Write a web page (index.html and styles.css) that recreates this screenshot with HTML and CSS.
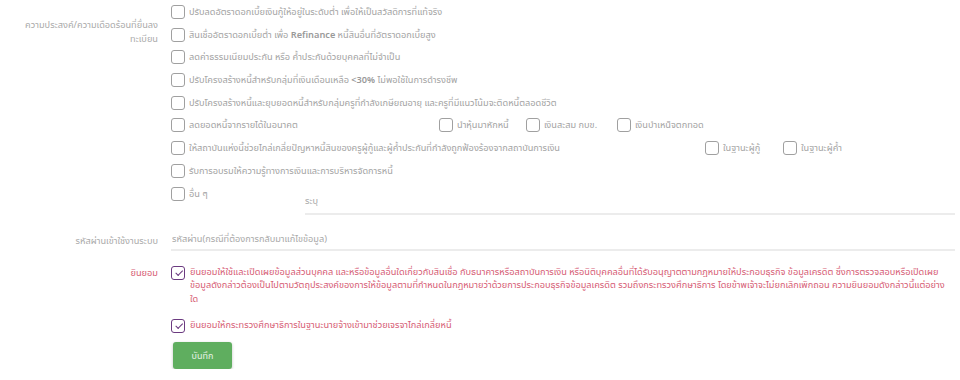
FILE: index.html
```html
<!doctype html>
<html lang="th">
<head>
  <meta charset="UTF-8">
  <meta name="viewport" content="width=device-width, initial-scale=1.0">
  <title>ลงทะเบียน</title>
  <link rel="stylesheet" href="styles.css">
</head>
<body>
<form class="register-form">
  <div class="form-row row-needs">
    <label class="form-label label-needs">ความประสงค์/ความเดือดร้อนที่ยื่นลงทะเบียน</label>
    <div class="check-list">
      <div class="check-item"><span class="check-box"></span><span>ปรับลดอัตราดอกเบี้ยเงินกู้ให้อยู่ในระดับต่ำ เพื่อให้เป็นสวัสดิการที่แท้จริง</span></div>
      <div class="check-item"><span class="check-box"></span><span>สินเชื่ออัตราดอกเบี้ยต่ำ เพื่อ <b>Refinance</b> หนี้สินอื่นที่อัตราดอกเบี้ยสูง</span></div>
      <div class="check-item"><span class="check-box"></span><span>ลดค่าธรรมเนียมประกัน หรือ ค้ำประกันด้วยบุคคลที่ไม่จำเป็น</span></div>
      <div class="check-item"><span class="check-box"></span><span>ปรับโครงสร้างหนี้สำหรับกลุ่มที่เงินเดือนเหลือ <b>&lt;30%</b> ไม่พอใช้ในการดำรงชีพ</span></div>
      <div class="check-item"><span class="check-box"></span><span>ปรับโครงสร้างหนี้และยุบยอดหนี้สำหรับกลุ่มครูที่กำลังเกษียณอายุ และครูที่มีแนวโน้มจะติดหนี้ตลอดชีวิต</span></div>
      <div class="check-item">
        <span class="check-box"></span><span class="item-text text-short">ลดยอดหนี้จากรายได้ในอนาคต</span>
        <span class="sub-option opt-1"><span class="check-box"></span><span>นำหุ้นมาหักหนี้</span></span>
        <span class="sub-option opt-2"><span class="check-box"></span><span>เงินสะสม กบข.</span></span>
        <span class="sub-option"><span class="check-box"></span><span>เงินบำเหน็จตกทอด</span></span>
      </div>
      <div class="check-item">
        <span class="check-box"></span><span class="item-text text-long">ให้สถาบันแห่งนี้ช่วยไกล่เกลี่ยปัญหาหนี้สินของครูผู้กู้และผู้ค้ำประกันที่กำลังถูกฟ้องร้องจากสถาบันการเงิน</span>
        <span class="sub-option opt-3"><span class="check-box"></span><span>ในฐานะผู้กู้</span></span>
        <span class="sub-option"><span class="check-box"></span><span>ในฐานะผู้ค้ำ</span></span>
      </div>
      <div class="check-item"><span class="check-box"></span><span>รับการอบรมให้ความรู้ทางการเงินและการบริหารจัดการหนี้</span></div>
      <div class="check-item item-other">
        <span class="check-box"></span><span class="item-text text-other">อื่น ๆ</span>
        <input class="line-input input-other" type="text" placeholder="ระบุ">
      </div>
    </div>
  </div>

  <div class="form-row row-password">
    <label class="form-label">รหัสผ่านเข้าใช้งานระบบ</label>
    <input class="line-input" type="password" placeholder="รหัสผ่าน(กรณีที่ต้องการกลับมาแก้ไขข้อมูล)">
  </div>

  <div class="form-row row-consent">
    <label class="form-label label-consent">ยินยอม</label>
    <div class="consent-list">
      <div class="consent-item"><span class="check-box checked"></span><span>ยินยอมให้ใช้และเปิดเผยข้อมูลส่วนบุคคล และหรือข้อมูลอื่นใดเกี่ยวกับสินเชื่อ กับธนาคารหรือสถาบันการเงิน หรือนิติบุคคลอื่นที่ได้รับอนุญาตตามกฎหมายให้ประกอบธุรกิจ ข้อมูลเครดิต ซึ่งการตรวจสอบหรือเปิดเผยข้อมูลดังกล่าวต้องเป็นไปตามวัตถุประสงค์ของการให้ข้อมูลตามที่กำหนดในกฎหมายว่าด้วยการประกอบธุรกิจข้อมูลเครดิต รวมถึงกระทรวงศึกษาธิการ โดยข้าพเจ้าจะไม่ยกเลิกเพิกถอน ความยินยอมดังกล่าวนี้แต่อย่าง<br>ใด</span></div>
      <div class="consent-item"><span class="check-box checked"></span><span>ยินยอมให้กระทรวงศึกษาธิการในฐานะนายจ้างเข้ามาช่วยเจรจาไกล่เกลี่ยหนี้</span></div>
      <button class="btn-save" type="button">บันทึก</button>
    </div>
  </div>
</form>
</body>
</html>
```

FILE: styles.css
```css
body {
  margin: 0;
  background: #fff;
  font-family: "Noto Sans Thai", "Noto Sans", sans-serif;
  font-size: 9.2px;
  color: #a3a3a3;
}

.register-form {
  padding: 5px 5px 0 0;
}

.form-row {
  display: grid;
  grid-template-columns: 158px 1fr;
  column-gap: 13px;
}

.form-label {
  text-align: right;
  padding-left: 18px;
  line-height: 14px;
  color: #aaa;
}

.label-needs {
  padding-top: 13px;
}

.check-list {
  display: flex;
  flex-direction: column;
  gap: 8.7px;
}

.check-item {
  display: flex;
  align-items: center;
  line-height: 14px;
  white-space: nowrap;
}

.check-item b {
  font-weight: 600;
  color: #999;
}

.check-box {
  flex: none;
  box-sizing: border-box;
  width: 14px;
  height: 14px;
  border: 1px solid #a0a0a0;
  border-radius: 3px;
  margin-right: 4px;
  background: #fff;
}

.check-box.checked {
  border-color: #6b3a80;
  position: relative;
}

.check-box.checked:after {
  content: '';
  position: absolute;
  left: 3px;
  top: 1px;
  width: 6px;
  height: 3px;
  border-left: 1.5px solid #6b3a80;
  border-bottom: 1.5px solid #6b3a80;
  transform: rotate(-45deg) translate(-1px, 2px);
}

.item-text {
  flex: none;
}

.text-short {
  width: 250px;
}

.text-long {
  width: 516px;
}

.text-other {
  width: 116px;
}

.sub-option {
  display: flex;
  align-items: center;
  flex: none;
}

.opt-1 {
  width: 87px;
}

.opt-2 {
  width: 91px;
}

.opt-3 {
  width: 78px;
}

.item-other {
  align-items: flex-start;
}

.line-input {
  box-sizing: border-box;
  border: 0;
  border-bottom: 2px solid #ececec;
  outline: none;
  background: transparent;
  font: inherit;
  color: #999;
  padding: 0;
  height: 22px;
}

.line-input::placeholder {
  color: #a8a8a8;
}

.input-other {
  flex: 1;
  margin-top: 3px;
  height: 25px;
}

.row-password {
  margin-top: 14px;
  align-items: end;
}

.row-password .form-label {
  padding-bottom: 3px;
}

.row-password .line-input {
  padding-left: 1px;
}

.row-consent {
  margin-top: 15px;
}

.label-consent {
  color: #d65c74;
  padding-top: 0;
}

.consent-list {
  display: flex;
  flex-direction: column;
  align-items: flex-start;
}

.consent-item {
  display: flex;
  align-items: flex-start;
  line-height: 13.5px;
  color: #d65c74;
  margin-bottom: 13px;
}

.consent-item .check-box {
  margin-top: 0;
  margin-right: 5px;
}

.consent-item + .consent-item {
  margin-bottom: 9px;
}

.btn-save {
  margin-left: 2px;
  width: 59px;
  height: 27px;
  border: 0;
  border-radius: 3px;
  background: #5fae5f;
  color: #e8f3e8;
  font: inherit;
  font-size: 9px;
  box-shadow: 0 1px 3px rgba(0, 0, 0, 0.25);
}
```
